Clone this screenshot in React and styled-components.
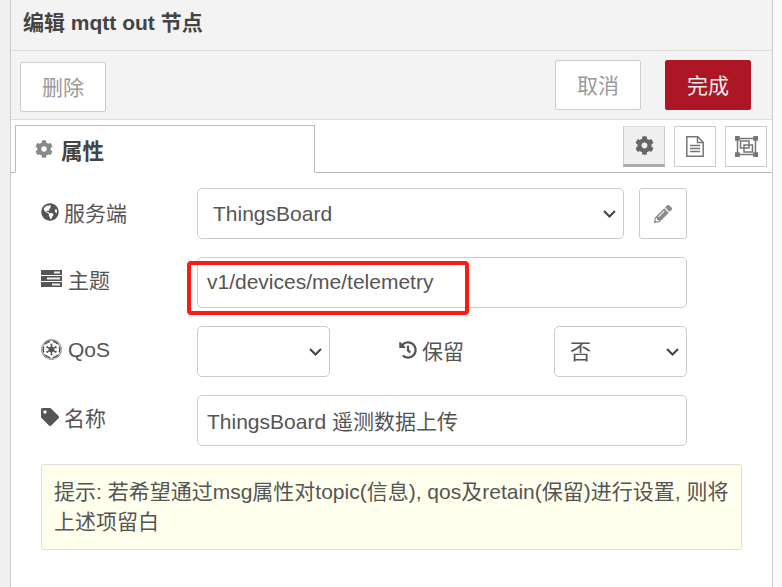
import React from "react";
import styled, { createGlobalStyle } from "styled-components";
import { FaCog, FaGlobeAmericas, FaEmpire, FaHistory, FaTag, FaPencilAlt } from "react-icons/fa";

const GlobalStyle = createGlobalStyle`
  html, body {
    margin: 0;
    padding: 0;
    background: #fafafa;
  }
  body {
    font-family: "Liberation Sans", "Noto Sans CJK SC", sans-serif;
    color: #555;
  }
  * {
    box-sizing: border-box;
  }
`;

const Page = styled.div`
  width: 782px;
  height: 587px;
  overflow: hidden;
  padding-left: 10px;
  background: linear-gradient(to right, #f0f0f0 10px, #fafafa 10px);
`;

const Panel = styled.div`
  width: 763px;
  height: 587px;
  background: #fff;
  border-left: 1px solid #ccc;
  border-right: 1px solid #ccc;
  position: relative;
`;

const Title = styled.div`
  height: 51px;
  background: #f3f3f3;
  border-bottom: 1px solid #ddd;
  padding: 11px 0 0 12px;
  font-size: 21px;
  line-height: 24px;
  font-weight: 700;
  color: #444;
`;

const Toolbar = styled.div`
  height: 69px;
  background: #f3f3f3;
  border-bottom: 1px solid #ddd;
  padding: 9px 21px 0 9px;
  display: flex;
  justify-content: space-between;
  align-items: flex-start;
`;

const ActionGroup = styled.div`
  display: flex;
  gap: 24px;
`;

const ActionButton = styled.button`
  width: 86px;
  height: 50px;
  margin-top: ${(p) => p.$offset || 0}px;
  border-radius: 2px;
  border: 1px solid ${(p) => (p.$primary ? "#ad1625" : "#ccc")};
  background: ${(p) => (p.$primary ? "#ad1625" : "#fff")};
  color: ${(p) => (p.$primary ? "#eee" : "#999")};
  font-family: inherit;
  font-size: 21px;
  padding: 0 0 2px;
`;

const TabBar = styled.div`
  height: 53px;
  padding: 5px 5px 0 4px;
  display: flex;
  justify-content: space-between;
  align-items: flex-start;
  border-bottom: 1px solid #bbb;
`;

const Tab = styled.div`
  width: 300px;
  height: 48px;
  background: #fff;
  border: 1px solid #bbb;
  border-bottom: 1px solid #fff;
  display: flex;
  align-items: center;
  gap: 8px;
  padding-left: 19px;
  font-size: 21.5px;
  font-weight: 700;
  color: #444;

  svg {
    font-size: 18px;
    color: #888;
  }
`;

const TabTools = styled.div`
  display: flex;
  gap: 9px;
  padding: 1px 0 0 0;
`;

const ToolButton = styled.div`
  width: 42px;
  height: 41px;
  border: 1px solid #ccc;
  background: ${(p) => (p.$active ? "#efefef" : "#fff")};
  border-bottom: ${(p) => (p.$active ? "3px solid #aaa" : "1px solid #ccc")};
  border-top-color: ${(p) => (p.$active ? "#ddd" : "#ccc")};
  display: flex;
  align-items: center;
  justify-content: center;
  color: #666;
  font-size: 19px;
`;

const Form = styled.div`
  padding: 15px 0 0 30px;
  display: flex;
  flex-direction: column;
  gap: 18px;
`;

const Row = styled.div`
  display: flex;
  align-items: center;
  height: 51px;
`;

const Label = styled.label`
  width: ${(p) => p.$width || 156}px;
  padding-left: ${(p) => p.$inset || 0}px;
  padding-bottom: ${(p) => p.$lift || 4}px;
  flex: none;
  display: flex;
  align-items: center;
  gap: ${(p) => p.$gap || 5}px;
  font-size: 21px;
  color: #555;

  svg {
    font-size: ${(p) => p.$iconSize || 18}px;
    flex: none;
  }
`;

const SelectBox = styled.div`
  position: relative;
  width: ${(p) => p.$width}px;
  flex: none;

  svg {
    position: absolute;
    right: 8px;
    top: 22px;
    pointer-events: none;
  }
`;

const Select = styled.select`
  appearance: none;
  display: block;
  width: 100%;
  height: 51px;
  background: #fff;
  border: 1px solid #ccc;
  border-radius: 5px;
  font-family: inherit;
  font-size: 21px;
  color: #555;
  padding: 0 15px;
`;

const Input = styled.input`
  width: 490px;
  height: 51px;
  border: 1px solid #ccc;
  border-radius: 5px;
  font-family: inherit;
  font-size: 21px;
  color: #555;
  padding: 0 9px 2px;
  background: #fff;
`;

const EditButton = styled.div`
  width: 48px;
  height: 51px;
  margin-left: 15px;
  border: 1px solid #ccc;
  border-radius: 3px;
  display: flex;
  align-items: center;
  justify-content: center;
  color: #888;
  font-size: 18px;
`;

const Tip = styled.div`
  width: 701px;
  height: 86px;
  background: #ffe;
  border: 1px solid #ddd;
  border-radius: 3px;
  padding: 12px 12px 0 12px;
  font-size: 21px;
  line-height: 30px;
  color: #555;
`;

const Highlight = styled.div`
  position: absolute;
  left: 176px;
  top: 261px;
  width: 282px;
  height: 54px;
  border: 4px solid #fe1a12;
  border-radius: 4px;
  pointer-events: none;
`;

const Chevron = () => (
  <svg width="13" height="8" viewBox="0 0 13 8" fill="none">
    <path d="M1 1l5.5 5.5L12 1" stroke="#444" strokeWidth="2" />
  </svg>
);

// fa-tasks from the old font awesome, not in the v5 set
const TasksIcon = () => (
  <svg width="21" height="17" viewBox="0 0 21 17">
    <rect y="0" width="21" height="5" fill="#555" />
    <rect y="6" width="21" height="5" fill="#555" />
    <rect y="12" width="21" height="5" fill="#555" />
    <rect x="13" y="1.5" width="6" height="2" fill="#eee" />
    <rect x="6" y="7.5" width="13" height="2" fill="#eee" />
    <rect x="11" y="13.5" width="8" height="2" fill="#eee" />
  </svg>
);

const FileIcon = () => (
  <svg width="18" height="21" viewBox="0 0 18 21" fill="none" stroke="#777" strokeWidth="1.5">
    <path d="M.8.8h11l5.4 5.4v14H.8z" />
    <path d="M11.5 1v5.5H17" />
    <path d="M4 9.5h10M4 12.5h10M4 15.5h10" />
  </svg>
);

const GroupIcon = () => (
  <svg width="23" height="21" viewBox="0 0 23 21" fill="none" stroke="#777" strokeWidth="1.5">
    <rect x="2.5" y="2.5" width="18" height="16" />
    <rect x="5.5" y="5" width="8.5" height="7" />
    <rect x="9" y="9" width="8.5" height="7" />
    <rect x=".5" y=".5" width="3.5" height="3.5" fill="#777" />
    <rect x="19" y=".5" width="3.5" height="3.5" fill="#777" />
    <rect x=".5" y="17" width="3.5" height="3.5" fill="#777" />
    <rect x="19" y="17" width="3.5" height="3.5" fill="#777" />
  </svg>
);

export default function App() {
  return (
    <>
      <GlobalStyle />
      <Page>
        <Panel>
          <Title>编辑 mqtt out 节点</Title>
          <Toolbar>
            <ActionButton $offset={2}>删除</ActionButton>
            <ActionGroup>
              <ActionButton>取消</ActionButton>
              <ActionButton $primary>完成</ActionButton>
            </ActionGroup>
          </Toolbar>
          <TabBar>
            <Tab>
              <FaCog />
              属性
            </Tab>
            <TabTools>
              <ToolButton $active>
                <FaCog />
              </ToolButton>
              <ToolButton>
                <FileIcon />
              </ToolButton>
              <ToolButton>
                <GroupIcon />
              </ToolButton>
            </TabTools>
          </TabBar>
          <Form>
            <Row>
              <Label>
                <FaGlobeAmericas />
                服务端
              </Label>
              <SelectBox $width={427}>
                <Select defaultValue="tb">
                  <option value="tb">ThingsBoard</option>
                </Select>
                <Chevron />
              </SelectBox>
              <EditButton>
                <FaPencilAlt />
              </EditButton>
            </Row>
            <Row>
              <Label $gap={6} $lift={8}>
                <TasksIcon />
                主题
              </Label>
              <Input readOnly value="v1/devices/me/telemetry" />
            </Row>
            <Row>
              <Label $gap={6} $iconSize={21}>
                <FaEmpire />
                QoS
              </Label>
              <SelectBox $width={133}>
                <Select defaultValue="">
                  <option value=""></option>
                </Select>
                <Chevron />
              </SelectBox>
              <Label $width={224} $inset={69}>
                <FaHistory />
                保留
              </Label>
              <SelectBox $width={133}>
                <Select defaultValue="no">
                  <option value="no">否</option>
                </Select>
                <Chevron />
              </SelectBox>
            </Row>
            <Row>
              <Label $lift={8}>
                <FaTag />
                名称
              </Label>
              <Input readOnly value="ThingsBoard 遥测数据上传" />
            </Row>
            <Tip>
              提示: 若希望通过msg属性对topic(信息), qos及retain(保留)进行设置, 则将上述项留白
            </Tip>
          </Form>
          <Highlight />
        </Panel>
      </Page>
    </>
  );
}
